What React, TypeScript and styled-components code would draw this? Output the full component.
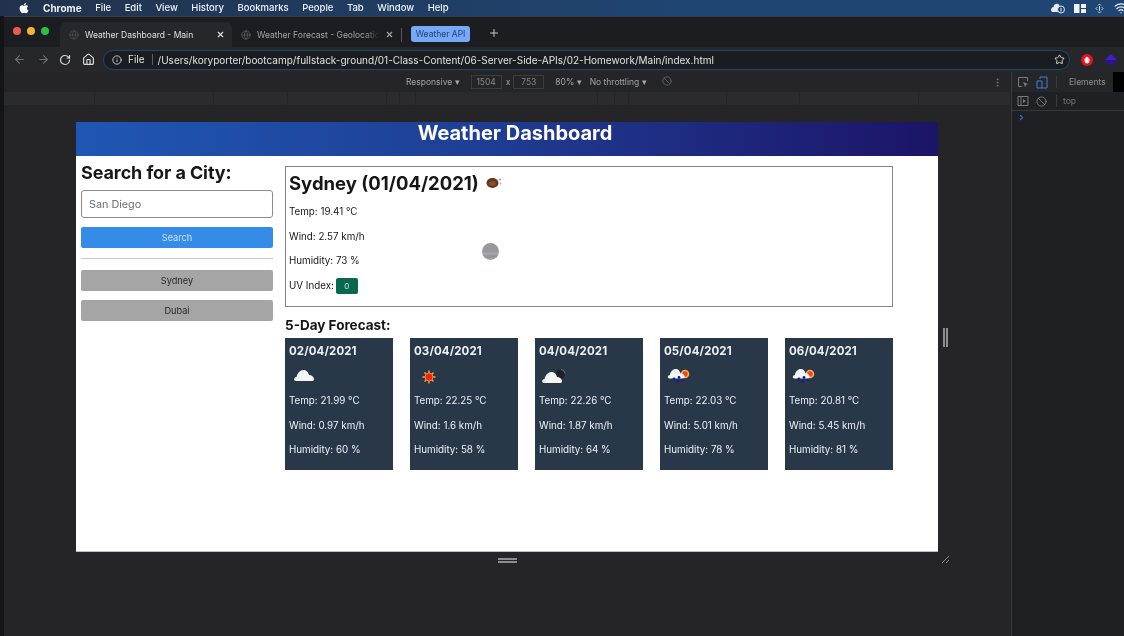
import React from "react";
import styled, { createGlobalStyle } from "styled-components";
import {
  ArrowLeft,
  ArrowRight,
  RotateCw,
  Home,
  Info,
  Star,
  Plus,
  X,
  Globe,
  Wifi,
  Ban,
  MoreVertical,
  ChevronRight,
} from "lucide-react";
import { FaApple } from "react-icons/fa";

const GlobalStyle = createGlobalStyle`
  html, body {
    margin: 0;
    padding: 0;
    background: #111;
  }
  * {
    box-sizing: border-box;
  }
`;

// the reference is a soft video frame, so everything gets a slight blur
const Shell = styled.div`
  width: 1124px;
  height: 636px;
  overflow: hidden;
  display: flex;
  flex-direction: column;
  padding-left: 4px;
  background: #141416;
  font-family: Inter, "Liberation Sans", sans-serif;
  filter: blur(0.35px);
`;

const MenuBar = styled.div`
  height: 16px;
  flex: none;
  margin-left: -4px;
  display: flex;
  align-items: center;
  background: linear-gradient(90deg, #22324c, #1f4572 60%, #1f4672);
  color: #eef2f6;
  font-size: 9.5px;
  font-weight: 500;
  padding-left: 18px;
`;

const AppleMark = styled.span`
  display: flex;
  width: 25px;
  color: #fff;
`;

const MenuItems = styled.div`
  display: flex;
  gap: 13.5px;
`;

const MenuItem = styled.span<{ $bold?: boolean }>`
  font-weight: ${(p) => (p.$bold ? 700 : 500)};
  font-size: ${(p) => (p.$bold ? "10px" : "inherit")};
`;

const StatusIcons = styled.div`
  margin-left: auto;
  display: flex;
  align-items: center;
  gap: 8px;
  margin-right: -4px;
  color: #e8edf3;
`;

const StatusArrows = styled.svg`
  margin: 0 2px 0 1px;
`;

const TabStrip = styled.div`
  height: 31px;
  flex: none;
  display: flex;
  align-items: flex-end;
  background: #1c1d20;
  border-top: 1px solid #3a3d42;
  color: #c9cbce;
  font-size: 8.5px;
`;

const TrafficLights = styled.div`
  display: flex;
  align-items: center;
  gap: 6px;
  width: 56px;
  height: 29px;
  padding: 0 0 3px 9px;
`;

const Light = styled.span<{ $color: string }>`
  width: 8px;
  height: 8px;
  border-radius: 50%;
  background: ${(p) => p.$color};
`;

const Tab = styled.div<{ $active?: boolean }>`
  width: ${(p) => (p.$active ? "172px" : "169px")};
  height: 25px;
  display: flex;
  align-items: center;
  gap: 6px;
  padding: 0 7px 0 9px;
  border-radius: 6px 6px 0 0;
  background: ${(p) => (p.$active ? "#26272a" : "transparent")};
  color: ${(p) => (p.$active ? "#dfe0e2" : "#a4a6a9")};
  svg {
    flex: none;
  }
`;

const TabTitle = styled.span<{ $fade?: boolean }>`
  flex: 1;
  overflow: hidden;
  white-space: nowrap;
  mask-image: ${(p) => (p.$fade ? "linear-gradient(90deg, #000 88%, transparent)" : "none")};
`;

const TabSeparator = styled.span`
  width: 1px;
  height: 14px;
  margin: 0 9px 5px 0;
  background: #55575a;
`;

const GroupPill = styled.span`
  width: 59px;
  height: 16px;
  margin-bottom: 5px;
  display: flex;
  align-items: center;
  justify-content: center;
  border-radius: 3px;
  background: #78a9f8;
  color: #1e3e78;
`;

const NewTab = styled.span`
  display: flex;
  margin: 0 0 8px 18px;
  color: #c4c6c9;
`;

const AddressRow = styled.div`
  height: 25px;
  flex: none;
  display: flex;
  align-items: center;
  padding-left: 9px;
  background: #26272a;
  color: #8a8c8f;
`;

const NavButton = styled.span<{ $lit?: boolean; $width: number }>`
  display: flex;
  width: ${(p) => p.$width}px;
  color: ${(p) => (p.$lit ? "#d8dadc" : "#6e7073")};
`;

const Omnibox = styled.div`
  width: 967px;
  height: 20px;
  margin-left: 6px;
  display: flex;
  align-items: center;
  padding: 0 4px 0 8px;
  border-radius: 10px;
  border: 1px solid #1b4a6e;
  background: #1b1c1f;
  color: #dfe1e3;
  font-size: 10px;
`;

const SiteLabel = styled.span`
  margin-left: 6px;
  padding-right: 7px;
  border-right: 1px solid #5b5d60;
  line-height: 11px;
`;

const UrlText = styled.span`
  flex: 1;
  margin-left: 5px;
  white-space: nowrap;
`;

const ExtensionSlot = styled.span<{ $left: number }>`
  display: flex;
  margin-left: ${(p) => p.$left}px;
`;

const Workspace = styled.div`
  flex: 1;
  display: flex;
  min-height: 0;
`;

const Emulator = styled.div`
  width: 1007px;
  flex: none;
  display: flex;
  flex-direction: column;
  background: #252527;
`;

const DeviceToolbar = styled.div`
  height: 20px;
  flex: none;
  display: flex;
  align-items: center;
  padding-left: 402px;
  color: #a2a4a6;
  font-size: 8.5px;
`;

const DeviceInput = styled.span`
  width: 31px;
  height: 14px;
  display: flex;
  align-items: center;
  justify-content: center;
  border: 1px solid #3c3d40;
  color: #85878a;
`;

const DeviceText = styled.span<{ $left: number }>`
  margin-left: ${(p) => p.$left}px;
  white-space: nowrap;
`;

const DeviceMenu = styled.span`
  display: flex;
  margin-left: auto;
  margin-right: 8px;
  color: #7f8184;
`;

const Ruler = styled.div`
  height: 13px;
  flex: none;
  display: flex;
  background: #2a2b2c;
`;

const RulerStep = styled.span<{ $width: number }>`
  width: ${(p) => p.$width}px;
  border-right: 1px solid #232425;
`;

const Canvas = styled.div`
  flex: 1;
  display: grid;
  grid-template-columns: 862px 1fr;
  grid-template-rows: 430px 1fr;
  padding: 17px 0 0 72px;
  background: #252527;
`;

const SideHandle = styled.div`
  display: flex;
  align-items: center;
  padding-left: 5px;
  &::before {
    content: "";
    width: 1px;
    height: 19px;
    border-left: 2px solid #8b8d8f;
    border-right: 2px solid #8b8d8f;
  }
`;

const BottomHandle = styled.div`
  display: flex;
  justify-content: center;
  padding-top: 6px;
  &::before {
    content: "";
    width: 19px;
    height: 1px;
    border-top: 2px solid #8b8d8f;
    border-bottom: 2px solid #8b8d8f;
  }
`;

const CornerHandle = styled.div`
  display: flex;
  padding: 3px 0 0 3px;
`;

const Page = styled.div`
  background: #fff;
  color: #161616;
  border-bottom: 1px solid #bdbdbd;
  display: flex;
  flex-direction: column;
`;

const PageHeader = styled.header`
  height: 34px;
  flex: none;
  display: flex;
  align-items: flex-start;
  justify-content: center;
  padding-left: 16px;
  background: linear-gradient(90deg, #1f57b4, #1f3f96 45%, #1c1467);
  color: #fff;
  font-size: 20px;
  font-weight: 700;
  line-height: 23px;
`;

const PageBody = styled.div`
  flex: 1;
  display: flex;
`;

const Sidebar = styled.aside`
  width: 209px;
  flex: none;
  display: flex;
  flex-direction: column;
  padding: 6px 0 0 5px;
`;

const SidebarTitle = styled.h2`
  margin: 0 0 6px;
  font-size: 18px;
  line-height: 22px;
  font-weight: 700;
  letter-spacing: -0.1px;
`;

const CityInput = styled.div`
  width: 192px;
  height: 28px;
  display: flex;
  align-items: center;
  padding-left: 7px;
  border: 1px solid #8f8a88;
  border-radius: 3px;
  color: #6a6f75;
  font-size: 10.8px;
`;

const ActionButton = styled.div<{ $primary?: boolean }>`
  width: 192px;
  height: 21px;
  display: flex;
  align-items: center;
  justify-content: center;
  border-radius: 2px;
  background: ${(p) => (p.$primary ? "#348ce8" : "#a5a5a5")};
  color: ${(p) => (p.$primary ? "#cfe3f8" : "#26282b")};
  font-size: 9.2px;
`;

const SearchAction = styled(ActionButton)`
  margin-top: 9px;
`;

const Divider = styled.hr`
  width: 192px;
  height: 1px;
  margin: 10px 0 11px;
  border: none;
  background: #c9c9c9;
`;

const CityList = styled.div`
  display: flex;
  flex-direction: column;
  gap: 9px;
`;

const Content = styled.main`
  width: 608px;
  padding-top: 10px;
`;

const TodayCard = styled.section`
  position: relative;
  height: 141px;
  padding: 4px 3px 0;
  border: 1px solid #858585;
  font-size: 9.8px;
`;

const TodayHeading = styled.h2`
  margin: 0 0 5px;
  display: flex;
  align-items: center;
  gap: 7px;
  font-size: 18.5px;
  line-height: 24px;
  font-weight: 700;
`;

const TodayLine = styled.p`
  height: 24.6px;
  margin: 0;
  display: flex;
  align-items: center;
  gap: 2px;
  line-height: 12px;
`;

const UvBadge = styled.span`
  width: 22px;
  height: 16px;
  display: flex;
  align-items: center;
  justify-content: center;
  border-radius: 2px;
  background: #07684f;
  color: #cfe6df;
  font-size: 8px;
`;

const CursorSpot = styled.span`
  position: absolute;
  left: 196px;
  top: 76px;
  width: 17px;
  height: 17px;
  border-radius: 50%;
  background: linear-gradient(180deg, #999 50%, #a9acae 64%, #8f9395 76%, #a4a7a9);
`;

const ForecastTitle = styled.h3`
  margin: 10px 0 4px;
  font-size: 13.5px;
  line-height: 17px;
  font-weight: 700;
`;

const ForecastRow = styled.div`
  display: grid;
  grid-template-columns: repeat(5, 108px);
  column-gap: 17px;
`;

const ForecastCard = styled.article`
  height: 132px;
  padding: 7px 4px 0;
  background: #293849;
  color: #eef1f4;
  font-size: 9.8px;
`;

const ForecastDate = styled.div`
  font-size: 11.5px;
  line-height: 13px;
  font-weight: 700;
  letter-spacing: 0.1px;
`;

const ForecastIcon = styled.div`
  height: 27px;
  margin-top: 4px;
  display: flex;
  align-items: center;
  padding-left: 3px;
`;

const ForecastLine = styled.p`
  height: 24.4px;
  margin: 0;
  display: flex;
  align-items: center;
  line-height: 12px;
`;

const Devtools = styled.aside`
  flex: 1;
  display: flex;
  flex-direction: column;
  background: #1e2023;
  border-left: 1px solid #3a3b3d;
  color: #8e9093;
  font-size: 8.5px;
`;

const DevtoolsTabs = styled.div`
  height: 20px;
  flex: none;
  display: flex;
  align-items: center;
  padding-left: 5px;
  background: #252628;
`;

const DevtoolsFilter = styled.div`
  height: 19px;
  flex: none;
  display: flex;
  align-items: center;
  padding-left: 5px;
  border-bottom: 1px solid #37383a;
  color: #77797c;
`;

const ToolIcon = styled.span<{ $width: number }>`
  display: flex;
  width: ${(p) => p.$width}px;
`;

const ToolDivider = styled.span`
  width: 1px;
  height: 12px;
  background: #3a3b3d;
`;

const ToolLabel = styled.span<{ $left: number }>`
  margin-left: ${(p) => p.$left}px;
`;

const ActiveTabEdge = styled.span`
  margin-left: auto;
  width: 11px;
  height: 20px;
  background: #000;
`;

const ConsolePrompt = styled.div`
  display: flex;
  padding: 2px 0 0 5px;
  color: #2f6fdc;
`;

const menuItems = ["File", "Edit", "View", "History", "Bookmarks", "People", "Tab", "Window", "Help"];

const rulerSteps = [91, 119, 74, 99, 13, 16, 182, 17, 14, 98, 73, 119, 92];

const forecast = [
  { date: "02/04/2021", icon: "cloud", temp: "21.99", wind: "0.97", humidity: "60" },
  { date: "03/04/2021", icon: "sun", temp: "22.25", wind: "1.6", humidity: "58" },
  { date: "04/04/2021", icon: "night", temp: "22.26", wind: "1.87", humidity: "64" },
  { date: "05/04/2021", icon: "rain", temp: "22.03", wind: "5.01", humidity: "78" },
  { date: "06/04/2021", icon: "rain", temp: "20.81", wind: "5.45", humidity: "81" },
];

const CloudShape = () => (
  <path
    d="M4 17C1.5 17 1.5 13.5 4.5 13C5.5 9 8 6 11.5 6C14.5 6 16.5 8.5 17 11C20 11 22 13.5 22 15C22 16.5 21 17 20 17Z"
    fill="#f3f5f7"
  />
);

const WeatherIcon: React.FC<{ kind: string }> = ({ kind }) => {
  if (kind === "sun") {
    return (
      <svg width="28" height="24" viewBox="0 0 28 24">
        <path d="M12 6.5v13M5.5 13h13M7.5 8.5l9 9M16.5 8.5l-9 9" stroke="#f0a45e" strokeWidth="1.4" />
        <circle cx="12" cy="13" r="4" fill="#f2230f" stroke="#f08a2c" />
      </svg>
    );
  }
  if (kind === "night") {
    return (
      <svg width="28" height="24" viewBox="0 0 28 24">
        <circle cx="18.5" cy="10" r="4.5" fill="#1d2027" />
        <path d="M19 5.5a4.5 4.5 0 0 1 4 4" stroke="#6a717d" fill="none" />
        <g transform="translate(-2 2)">
          <CloudShape />
        </g>
      </svg>
    );
  }
  if (kind === "rain") {
    return (
      <svg width="28" height="24" viewBox="0 0 28 24">
        <circle cx="18" cy="10" r="3.5" fill="#f0421c" stroke="#f3b053" strokeWidth="1.6" />
        <g transform="translate(-1 0) scale(0.85)">
          <CloudShape />
        </g>
        <g fill="#131f8f">
          <circle cx="7" cy="15" r="1.4" />
          <circle cx="10.5" cy="17.5" r="1.4" />
          <circle cx="12" cy="13.5" r="1.4" />
          <circle cx="15.5" cy="16" r="1.3" />
        </g>
      </svg>
    );
  }
  return (
    <svg width="28" height="24" viewBox="0 0 28 24">
      <CloudShape />
    </svg>
  );
};

const ClearNightIcon = () => (
  <svg width="18" height="14" viewBox="0 0 18 14">
    <ellipse cx="6.5" cy="7" rx="6" ry="5" fill="#64361e" />
    <ellipse cx="6.5" cy="7.5" rx="3.5" ry="2.5" fill="#8a4c2c" />
    <circle cx="14" cy="3.5" r="1" fill="#b58a70" />
    <circle cx="14.5" cy="7.5" r="0.9" fill="#c9a58a" />
  </svg>
);

export default function App() {
  return (
    <>
      <GlobalStyle />
      <Shell>
        <MenuBar>
          <AppleMark>
            <FaApple size={12} />
          </AppleMark>
          <MenuItems>
            <MenuItem $bold>Chrome</MenuItem>
            {menuItems.map((item) => (
              <MenuItem key={item}>{item}</MenuItem>
            ))}
          </MenuItems>
          <StatusIcons>
            <svg width="16" height="12" viewBox="0 0 16 12">
              <path d="M1 8c0-2 1.5-3 2.5-3 .5-3 4.5-4.5 6-1.5V10H3C2 10 1 9.5 1 8z" fill="#e8edf3" />
              <circle cx="11" cy="7.5" r="3.5" fill="#1f4672" stroke="#e8edf3" />
              <path d="M11 6v3.5" stroke="#e8edf3" />
            </svg>
            <svg width="12" height="11" viewBox="0 0 12 11">
              <path d="M0 1h5.5v9H0zM7 1h5v4H7zM7 6h5v4H7z" fill="#f1f4f7" />
            </svg>
            <StatusArrows width="9" height="11" viewBox="0 0 9 11">
              <path d="M3 2.5L4.5 1 6 2.5M3 8.5L4.5 10 6 8.5M2.5 4L1 5.5 2.5 7M6.5 4L8 5.5 6.5 7" stroke="#c9d3de" fill="none" />
              <path d="M4.5 3v5" stroke="#c9d3de" />
            </StatusArrows>
            <Wifi size={14} strokeWidth={2.2} />
          </StatusIcons>
        </MenuBar>

        <TabStrip>
          <TrafficLights>
            <Light $color="#ee5a52" />
            <Light $color="#f5b62e" />
            <Light $color="#27c23f" />
          </TrafficLights>
          <Tab $active>
            <Globe size={10} color="#4a4c50" />
            <TabTitle>Weather Dashboard - Main</TabTitle>
            <X size={9} strokeWidth={3} />
          </Tab>
          <Tab>
            <Globe size={10} color="#5a5c60" />
            <TabTitle $fade>Weather Forecast - Geolocatic</TabTitle>
            <X size={9} strokeWidth={3} />
          </Tab>
          <TabSeparator />
          <GroupPill>Weather API</GroupPill>
          <NewTab>
            <Plus size={12} strokeWidth={2} />
          </NewTab>
        </TabStrip>

        <AddressRow>
          <NavButton $width={24}>
            <ArrowLeft size={13} />
          </NavButton>
          <NavButton $width={22}>
            <ArrowRight size={13} />
          </NavButton>
          <NavButton $lit $width={23}>
            <RotateCw size={12} strokeWidth={2.4} />
          </NavButton>
          <NavButton $lit $width={15}>
            <Home size={13} strokeWidth={2.2} />
          </NavButton>
          <Omnibox>
            <Info size={10} />
            <SiteLabel>File</SiteLabel>
            <UrlText>/Users/koryporter/bootcamp/fullstack-ground/01-Class-Content/06-Server-Side-APIs/02-Homework/Main/index.html</UrlText>
            <Star size={11} />
          </Omnibox>
          <ExtensionSlot $left={11}>
            <svg width="12" height="12" viewBox="0 0 12 12">
              <circle cx="6" cy="6" r="6" fill="#e5141c" />
              <path d="M3.5 6.5V4.5l1 .5V3l1 0 .5-.5.5.5 1 .5V5l1-.5v2.5C8.5 8.5 7.5 9.5 6 9.5S3.5 8.5 3.5 6.5z" fill="#fbeeee" />
            </svg>
          </ExtensionSlot>
          <ExtensionSlot $left={12}>
            <svg width="12" height="12" viewBox="0 0 12 12">
              <path d="M6 0l6 6-6 6-6-6z" fill="#2c1296" />
              <path d="M6 0l6 6H0z" fill="#3f1fc0" />
            </svg>
          </ExtensionSlot>
        </AddressRow>

        <Workspace>
          <Emulator>
            <DeviceToolbar>
              <span>Responsive ▾</span>
              <DeviceText $left={11}>
                <DeviceInput>1504</DeviceInput>
              </DeviceText>
              <DeviceText $left={4}>x</DeviceText>
              <DeviceText $left={3}>
                <DeviceInput>753</DeviceInput>
              </DeviceText>
              <DeviceText $left={11}>80% ▾</DeviceText>
              <DeviceText $left={8}>No throttling ▾</DeviceText>
              <DeviceText $left={15}>
                <Ban size={10} color="#66686b" />
              </DeviceText>
              <DeviceMenu>
                <MoreVertical size={11} />
              </DeviceMenu>
            </DeviceToolbar>
            <Ruler>
              {rulerSteps.map((width, i) => (
                <RulerStep key={i} $width={width} />
              ))}
            </Ruler>
            <Canvas>
              <Page>
                <PageHeader>Weather Dashboard</PageHeader>
                <PageBody>
                  <Sidebar>
                    <SidebarTitle>Search for a City:</SidebarTitle>
                    <CityInput>San Diego</CityInput>
                    <SearchAction $primary>Search</SearchAction>
                    <Divider />
                    <CityList>
                      <ActionButton>Sydney</ActionButton>
                      <ActionButton>Dubai</ActionButton>
                    </CityList>
                  </Sidebar>
                  <Content>
                    <TodayCard>
                      <TodayHeading>
                        Sydney (01/04/2021)
                        <ClearNightIcon />
                      </TodayHeading>
                      <TodayLine>Temp: 19.41 °C</TodayLine>
                      <TodayLine>Wind: 2.57 km/h</TodayLine>
                      <TodayLine>Humidity: 73 %</TodayLine>
                      <TodayLine>
                        UV Index: <UvBadge>0</UvBadge>
                      </TodayLine>
                      <CursorSpot />
                    </TodayCard>
                    <ForecastTitle>5-Day Forecast:</ForecastTitle>
                    <ForecastRow>
                      {forecast.map((day) => (
                        <ForecastCard key={day.date}>
                          <ForecastDate>{day.date}</ForecastDate>
                          <ForecastIcon>
                            <WeatherIcon kind={day.icon} />
                          </ForecastIcon>
                          <ForecastLine>Temp: {day.temp} °C</ForecastLine>
                          <ForecastLine>Wind: {day.wind} km/h</ForecastLine>
                          <ForecastLine>Humidity: {day.humidity} %</ForecastLine>
                        </ForecastCard>
                      ))}
                    </ForecastRow>
                  </Content>
                </PageBody>
              </Page>
              <SideHandle />
              <BottomHandle />
              <CornerHandle>
                <svg width="9" height="9" viewBox="0 0 9 9">
                  <path d="M1 8L8 1M5 8l3-3" stroke="#85878a" fill="none" />
                </svg>
              </CornerHandle>
            </Canvas>
          </Emulator>
          <Devtools>
            <DevtoolsTabs>
              <ToolIcon $width={19}>
                <svg width="12" height="12" viewBox="0 0 12 12">
                  <path d="M5 10.5H1.5v-9h9V5" stroke="#7b7d80" fill="none" />
                  <path d="M6 6l5 2-2 1-1 2z" fill="#7b7d80" />
                </svg>
              </ToolIcon>
              <ToolIcon $width={20}>
                <svg width="12" height="13" viewBox="0 0 12 13">
                  <path d="M4 3V1h7v11H1V5h5v7" stroke="#3f7fe0" fill="none" />
                </svg>
              </ToolIcon>
              <ToolDivider />
              <ToolLabel $left={12}>Elements</ToolLabel>
              <ActiveTabEdge />
            </DevtoolsTabs>
            <DevtoolsFilter>
              <ToolIcon $width={19}>
                <svg width="12" height="12" viewBox="0 0 12 12">
                  <path d="M1 1.5h10v9H1zM4 1.5v9" stroke="#7b7d80" fill="none" />
                  <path d="M6 4l3 2-3 2z" fill="#7b7d80" />
                </svg>
              </ToolIcon>
              <ToolIcon $width={20}>
                <Ban size={11} />
              </ToolIcon>
              <ToolDivider />
              <ToolLabel $left={6}>top</ToolLabel>
            </DevtoolsFilter>
            <ConsolePrompt>
              <ChevronRight size={9} strokeWidth={3} />
            </ConsolePrompt>
          </Devtools>
        </Workspace>
      </Shell>
    </>
  );
}
